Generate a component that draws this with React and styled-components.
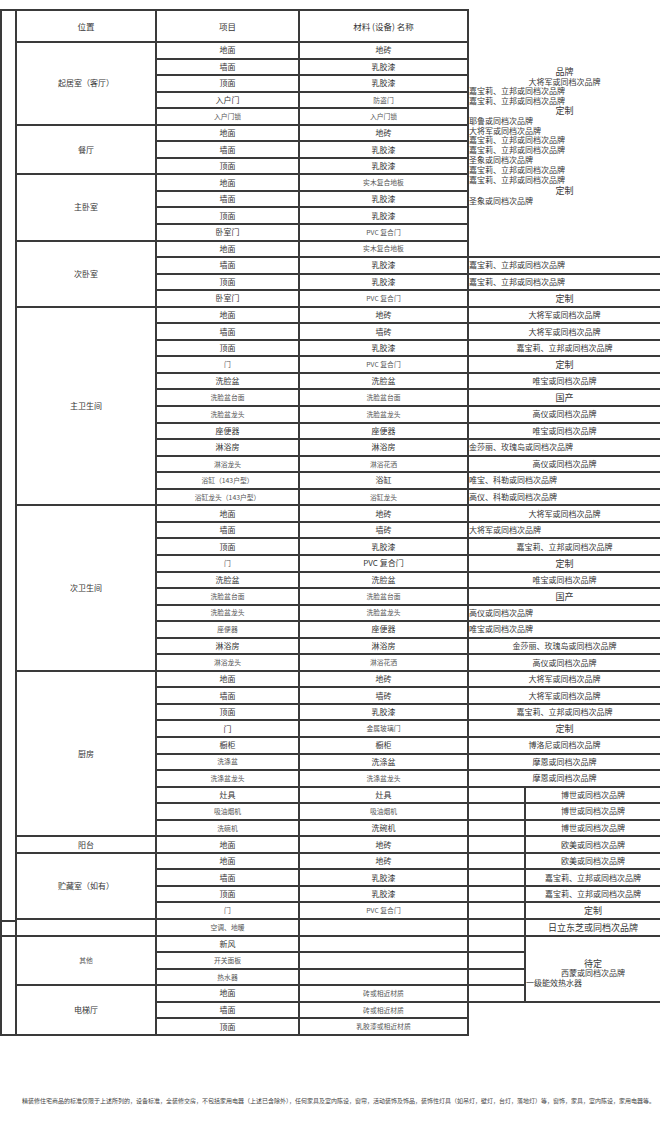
import React from 'react';
import styled, { createGlobalStyle } from 'styled-components';

const GlobalStyle = createGlobalStyle`
  html, body {
    margin: 0;
    padding: 0;
    background: #fff;
  }
  body {
    font-family: "Noto Sans CJK SC", "Noto Sans", sans-serif;
    color: #3a3a3a;
    overflow: hidden;
  }
`;

const LINE = '#3a3a3a';
const sizes = { n: '8px', s: '6.8px', l: '9px', h: '8.5px' };

const edgeWidths = (edges = '') =>
    ['t', 'r', 'b', 'l'].map(e => (edges.includes(e) ? '2px' : '0')).join(' ');

const Page = styled.div`
    width: 660px;
    height: 1134px;
    padding-top: 9px;
    box-sizing: border-box;
    overflow: hidden;
`;

const Table = styled.div`
    display: grid;
    grid-template-columns: 17px 140px 143px 169px 57px 134px;
    grid-template-rows: 34px repeat(60, 16.55px);
`;

const Cell = styled.div`
    grid-column: ${p => p.$col};
    grid-row: ${p => p.$row};
    box-sizing: border-box;
    display: flex;
    align-items: center;
    justify-content: ${p => (p.$left ? 'flex-start' : 'center')};
    white-space: nowrap;
    font-size: ${p => sizes[p.$size || 'n']};
    line-height: 1;
    color: ${p => (p.$size === 's' ? '#555' : '#363636')};
    border-style: solid;
    border-color: ${LINE};
    border-width: ${p => edgeWidths(p.$edges)};
`;

// brand column top block: text spilled out of its original cells
const Spill = styled.div`
    grid-column: 5 / 7;
    grid-row: 2 / span 13;
    box-sizing: border-box;
    border-bottom: 2px solid ${LINE};
    padding-top: 23.8px;
    display: flex;
    flex-direction: column;
`;

const SpillLine = styled.div`
    height: 9.8px;
    line-height: 9.8px;
    margin-top: ${p => (p.$gap ? '1.6px' : '0')};
    font-size: ${p => (p.$big ? '9px' : '8px')};
    text-align: ${p => (p.$left ? 'left' : 'center')};
    white-space: nowrap;
    color: #383838;
`;

const Pending = styled.div`
    grid-column: 6;
    grid-row: 56 / span 4;
    box-sizing: border-box;
    border-bottom: 2px solid ${LINE};
    padding-top: 22px;
    display: flex;
    flex-direction: column;
`;

const Footnote = styled.div`
    margin-top: 62px;
    padding-left: 22px;
    font-size: 6px;
    line-height: 6px;
    white-space: nowrap;
    color: #444;
`;

const sections = [
    { name: '起居室（客厅）', rows: [['地面', '地砖'], ['墙面', '乳胶漆'], ['顶面', '乳胶漆'], ['入户门', '~防盗门'], ['~入户门锁', '~入户门锁']] },
    { name: '餐厅', rows: [['地面', '地砖'], ['墙面', '乳胶漆'], ['顶面', '乳胶漆']] },
    { name: '主卧室', rows: [['地面', '~实木复合地板'], ['墙面', '乳胶漆'], ['顶面', '乳胶漆'], ['卧室门', '~PVC 复合门']] },
    { name: '次卧室', rows: [['地面', '~实木复合地板'], ['墙面', '乳胶漆'], ['顶面', '乳胶漆'], ['卧室门', '~PVC 复合门']] },
    {
        name: '主卫生间',
        rows: [
            ['地面', '地砖'], ['墙面', '墙砖'], ['顶面', '乳胶漆'], ['~门', '~PVC 复合门'],
            ['洗脸盆', '洗脸盆'], ['~洗脸盆台面', '~洗脸盆台面'], ['~洗脸盆龙头', '~洗脸盆龙头'],
            ['座便器', '座便器'], ['淋浴房', '淋浴房'], ['~淋浴龙头', '~淋浴花洒'],
            ['~浴缸（143户型）', '浴缸'], ['~浴缸龙头（143户型）', '~浴缸龙头'],
        ],
    },
    {
        name: '次卫生间',
        rows: [
            ['地面', '地砖'], ['墙面', '墙砖'], ['顶面', '乳胶漆'], ['~门', 'PVC 复合门'],
            ['洗脸盆', '洗脸盆'], ['~洗脸盆台面', '~洗脸盆台面'], ['~洗脸盆龙头', '~洗脸盆龙头'],
            ['~座便器', '座便器'], ['淋浴房', '淋浴房'], ['~淋浴龙头', '~淋浴花洒'],
        ],
    },
    {
        name: '厨房',
        rows: [
            ['地面', '地砖'], ['墙面', '墙砖'], ['顶面', '乳胶漆'], ['门', '~金属玻璃门'],
            ['橱柜', '橱柜'], ['~洗涤盆', '洗涤盆'], ['~洗涤盆龙头', '~洗涤盆龙头'],
            ['灶具', '灶具'], ['~吸油烟机', '~吸油烟机'], ['~洗碗机', '洗碗机'],
        ],
    },
    { name: '阳台', rows: [['地面', '地砖']] },
    { name: '贮藏室（如有）', rows: [['地面', '地砖'], ['墙面', '乳胶漆'], ['顶面', '乳胶漆'], ['~门', '~PVC 复合门']] },
    { name: '', rows: [['~空调、地暖', '']] },
    { name: '~其他', rows: [['新风', ''], ['~开关面板', ''], ['~热水器', '']] },
    { name: '电梯厅', rows: [['地面', '~砖或相近材质'], ['墙面', '~砖或相近材质'], ['顶面', '~乳胶漆或相近材质']] },
];

const spill = [
    ['c', '品牌', 'big'],
    ['c', '大将军或同档次品牌'],
    ['l', '嘉宝莉、立邦或同档次品牌'],
    ['l', '嘉宝莉、立邦或同档次品牌'],
    ['c', '定制', 'big'],
    ['l', '耶鲁或同档次品牌'],
    ['l', '大将军或同档次品牌'],
    ['l', '嘉宝莉、立邦或同档次品牌'],
    ['l', '嘉宝莉、立邦或同档次品牌'],
    ['l', '圣象或同档次品牌'],
    ['l', '嘉宝莉、立邦或同档次品牌'],
    ['l', '嘉宝莉、立邦或同档次品牌'],
    ['c', '定制', 'big', 'gap'],
    ['l', '圣象或同档次品牌'],
];

// data rows 14..45 span the whole brand column, 46..54 use the right half only
const brands = {
    14: 'l嘉宝莉、立邦或同档次品牌', 15: 'l嘉宝莉、立邦或同档次品牌', 16: 'b定制',
    17: 'c大将军或同档次品牌', 18: 'c大将军或同档次品牌', 19: 'c嘉宝莉、立邦或同档次品牌', 20: 'b定制',
    21: 'c唯宝或同档次品牌', 22: 'b国产', 23: 'c高仪或同档次品牌', 24: 'c唯宝或同档次品牌',
    25: 'l金莎丽、玫瑰岛或同档次品牌', 26: 'c高仪或同档次品牌', 27: 'l唯宝、科勒或同档次品牌', 28: 'l高仪、科勒或同档次品牌',
    29: 'c大将军或同档次品牌', 30: 'l大将军或同档次品牌', 31: 'c嘉宝莉、立邦或同档次品牌', 32: 'b定制',
    33: 'c唯宝或同档次品牌', 34: 'b国产', 35: 'l高仪或同档次品牌', 36: 'l唯宝或同档次品牌',
    37: 'c金莎丽、玫瑰岛或同档次品牌', 38: 'c高仪或同档次品牌',
    39: 'c大将军或同档次品牌', 40: 'c大将军或同档次品牌', 41: 'c嘉宝莉、立邦或同档次品牌', 42: 'b定制',
    43: 'c博洛尼或同档次品牌', 44: 'c摩恩或同档次品牌', 45: 'c摩恩或同档次品牌',
    46: 'c博世或同档次品牌', 47: 'c博世或同档次品牌', 48: 'c博世或同档次品牌',
    49: 'c欧美或同档次品牌', 50: 'c欧美或同档次品牌', 51: 'c嘉宝莉、立邦或同档次品牌', 52: 'c嘉宝莉、立邦或同档次品牌',
    53: 'b定制', 54: 'b日立东芝或同档次品牌',
};

const parse = text => (text.startsWith('~') ? [text.slice(1), 's'] : [text, 'n']);

const buildRows = () => {
    const cells = [];
    let row = 2;
    sections.forEach((sec, si) => {
        const [name, nameSize] = parse(sec.name);
        cells.push(
            <Cell key={`s${si}`} $col="2" $row={`${row} / span ${sec.rows.length}`} $edges="rb" $size={nameSize}>
                {name}
            </Cell>
        );
        sec.rows.forEach(([item, mat], i) => {
            const [itemText, itemSize] = parse(item);
            const [matText, matSize] = parse(mat);
            cells.push(
                <Cell key={`i${row + i}`} $col="3" $row={row + i} $edges="rb" $size={itemSize}>{itemText}</Cell>,
                <Cell key={`m${row + i}`} $col="4" $row={row + i} $edges="rb" $size={matSize}>{matText}</Cell>
            );
        });
        row += sec.rows.length;
    });
    return cells;
};

const buildBrands = () =>
    Object.entries(brands).map(([d, spec]) => {
        const data = Number(d);
        const kind = spec[0];
        const text = spec.slice(1);
        const split = data >= 46;
        return (
            <Cell
                key={`b${data}`}
                $col={split ? '6' : '5 / 7'}
                $row={data + 1}
                $edges="b"
                $left={kind === 'l'}
                $size={kind === 'b' ? 'l' : 'n'}
            >
                {text}
            </Cell>
        );
    });

const buildBlanks = () => {
    const out = [];
    for (let d = 46; d <= 58; d++) {
        out.push(<Cell key={`e${d}`} $col="5" $row={d + 1} $edges="rb" />);
    }
    return out;
};

const App = () => (
    <Page>
        <GlobalStyle />
        <Table>
            <Cell $col="1" $row="1 / 55" $edges="tlr" />
            <Cell $col="1" $row="55" $edges="tlrb" />
            <Cell $col="1" $row="56 / 62" $edges="lrb" />

            <Cell $col="2" $row="1" $edges="trb" $size="h">位置</Cell>
            <Cell $col="3" $row="1" $edges="trb" $size="h">项目</Cell>
            <Cell $col="4" $row="1" $edges="trb" $size="h">材料 (设备) 名称</Cell>

            {buildRows()}

            <Spill>
                {spill.map(([align, text, big, gap], i) => (
                    <SpillLine key={i} $left={align === 'l'} $big={!!big} $gap={!!gap}>{text}</SpillLine>
                ))}
            </Spill>

            {buildBrands()}
            {buildBlanks()}

            <Pending>
                <SpillLine $big>待定</SpillLine>
                <SpillLine>西蒙或同档次品牌</SpillLine>
                <SpillLine $left>一级能效热水器</SpillLine>
            </Pending>
        </Table>
        <Footnote>
            精装修住宅商品的标准仅限于上述所列的，设备标准，全装修交房，不包括家用电器（上述已含除外），任何家具及室内陈设，窗帘，活动装饰及饰品，装饰性灯具（如吊灯，壁灯，台灯，落地灯）等，窗饰，家具，室内陈设，家用电器等。
        </Footnote>
    </Page>
);

export default App;
